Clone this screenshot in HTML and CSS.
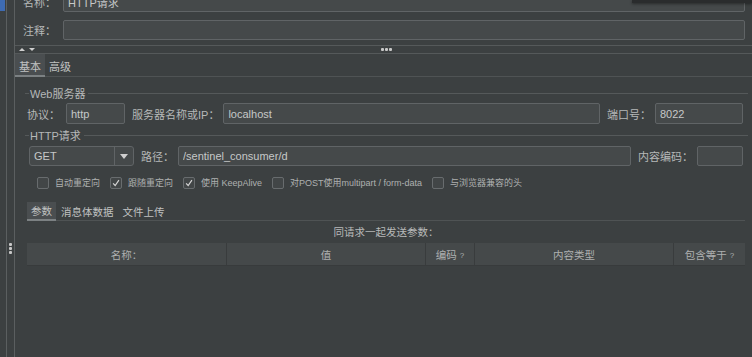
FILE: index.html
```html
<!DOCTYPE html>
<html lang="zh-CN">
<head>
    <meta charset="UTF-8" />
    <meta name="viewport" content="width=device-width, initial-scale=1.0" />
    <title>HTTP请求</title>
    <link rel="stylesheet" href="styles.css">
</head>
<body>
<div class="app">
    <div class="gutter"><div class="gutter-mark"></div></div>
    <div class="splitter"><span class="vgrip"><i></i><i></i><i></i></span></div>

    <div class="main">
        <div class="header-fields">
            <div class="field-row name-row">
                <label class="lbl">名称：</label>
                <input class="input grow" type="text" value="HTTP请求">
            </div>
            <div class="field-row">
                <label class="lbl">注释：</label>
                <input class="input grow" type="text" value="">
            </div>
        </div>

        <div class="divider-bar">
            <span class="arrows"><i class="up"></i><i class="down"></i></span>
            <span class="hgrip"><i></i><i></i><i></i></span>
        </div>

        <div class="tabs">
            <span class="tab active">基本</span>
            <span class="tab">高级</span>
        </div>

        <div class="panel">
            <div class="group-title"><span>Web服务器</span></div>
            <div class="row">
                <label class="lbl first">协议：</label>
                <input class="input proto" type="text" value="http">
                <label class="lbl">服务器名称或IP：</label>
                <input class="input grow" type="text" value="localhost">
                <label class="lbl">端口号：</label>
                <input class="input port" type="text" value="8022">
            </div>

            <div class="group-title"><span>HTTP请求</span></div>
            <div class="row row-request">
                <div class="combo">
                    <span class="combo-value">GET</span>
                    <span class="combo-btn"><i></i></span>
                </div>
                <label class="lbl">路径：</label>
                <input class="input grow" type="text" value="/sentinel_consumer/d">
                <label class="lbl">内容编码：</label>
                <input class="input enc" type="text" value="">
            </div>

            <div class="checks">
                <span class="check"><span class="box"></span>自动重定向</span>
                <span class="check"><span class="box on"><svg viewBox="0 0 12 12"><polyline points="2.5,6.5 5,9 9.5,2.5"/></svg></span>跟随重定向</span>
                <span class="check"><span class="box on"><svg viewBox="0 0 12 12"><polyline points="2.5,6.5 5,9 9.5,2.5"/></svg></span>使用 KeepAlive</span>
                <span class="check"><span class="box"></span>对POST使用multipart / form-data</span>
                <span class="check"><span class="box"></span>与浏览器兼容的头</span>
            </div>

            <div class="params">
                <div class="tabs small-tabs">
                    <span class="tab active">参数</span>
                    <span class="tab">消息体数据</span>
                    <span class="tab">文件上传</span>
                </div>
                <div class="params-caption">同请求一起发送参数：</div>
                <div class="table-head">
                    <span class="th">名称：</span>
                    <span class="th">值</span>
                    <span class="th">编码<small>?</small></span>
                    <span class="th">内容类型</span>
                    <span class="th">包含等于<small>?</small></span>
                </div>
            </div>
        </div>
    </div>

    <div class="popup-edge"></div>
</div>
</body>
</html>
```

FILE: styles.css
```css
* {
    box-sizing: border-box;
}
html, body {
    margin: 0;
    height: 100%;
}
body {
    background: #3c4041;
    color: #b6b8b8;
    font-family: "Liberation Sans", "Noto Sans CJK SC", sans-serif;
    font-size: 11px;
    overflow: hidden;
}
.app {
    position: relative;
    display: flex;
    height: 357px;
}
.gutter {
    width: 7px;
    border-right: 1px solid #5b5f60;
}
.gutter-mark {
    width: 5px;
    height: 11px;
    background: #3e6bb2;
}
.splitter {
    width: 8px;
    border-right: 1px solid #5b5f60;
    display: flex;
    justify-content: center;
    padding-top: 243px;
}
.vgrip {
    display: flex;
    flex-direction: column;
    gap: 1px;
}
.vgrip i, .hgrip i {
    display: block;
    width: 3px;
    height: 3px;
    background: #c8c8c8;
    border-radius: 1px;
}
.main {
    flex: 1;
    min-width: 0;
    display: flex;
    flex-direction: column;
}

/* name / comment */
.header-fields {
    padding: 0 7px 5px 8px;
    border-bottom: 1px solid #55595a;
}
.field-row {
    display: flex;
    align-items: center;
    height: 20px;
}
.field-row + .field-row {
    margin-top: 8px;
}
.name-row {
    margin-top: -8px;
}
.field-row .lbl {
    width: 40px;
    margin: 0;
}
.input {
    height: 20px;
    background: #45494a;
    border: 1px solid #606466;
    border-radius: 2px;
    color: #c6c8c8;
    font: inherit;
    padding: 0 4px;
    outline: none;
}
.grow {
    flex: 1;
    min-width: 0;
}

/* splitter bar */
.divider-bar {
    height: 8px;
    border-bottom: 1px solid #55595a;
    display: flex;
    align-items: center;
    padding-left: 4px;
}
.arrows {
    display: flex;
    gap: 4px;
    width: 362px;
}
.arrows i {
    width: 0;
    height: 0;
    border-left: 3px solid transparent;
    border-right: 3px solid transparent;
}
.arrows .up {
    border-bottom: 3px solid #cfcfcf;
}
.arrows .down {
    border-top: 3px solid #cfcfcf;
}
.hgrip {
    display: flex;
    gap: 1px;
}

/* tabs */
.tabs {
    display: flex;
    height: 23px;
    box-shadow: inset 0 -1px #4f5354;
}
.tab {
    display: flex;
    align-items: center;
    padding: 0 4px;
    color: #c0c2c2;
}
.tab.active {
    background: #4a4e50;
    border-bottom: 2px solid #7c8183;
    padding-top: 2px;
}

/* basic panel */
.panel {
    padding: 0 4px 0 10px;
}
.group-title {
    display: flex;
    align-items: center;
    height: 14px;
    margin-top: 9px;
}
.group-title::before {
    content: "";
    width: 4px;
    height: 1px;
    background: #55595a;
    margin-right: 1px;
}
.group-title::after {
    content: "";
    flex: 1;
    height: 1px;
    background: #55595a;
    margin-left: 3px;
}
.row {
    display: flex;
    align-items: center;
    height: 21px;
    margin-top: 3px;
    padding: 0 5px 0 2px;
}
.row .input {
    height: 21px;
}
.row + .group-title {
    margin-top: 4px;
}
.lbl {
    margin: 0 4px 0 7px;
    white-space: nowrap;
}
.lbl.first {
    margin-left: 0;
    margin-right: 6px;
}
.proto {
    width: 59px;
}
.port {
    width: 88px;
}
.row-request {
    height: 20px;
    margin-top: 4px;
    padding-left: 4px;
}
.row-request .input {
    height: 20px;
}
.enc {
    width: 46px;
}
.combo {
    display: flex;
    width: 105px;
    height: 20px;
    background: #45494a;
    border: 1px solid #606466;
    border-radius: 3px;
    color: #c6c8c8;
}
.combo-value {
    flex: 1;
    display: flex;
    align-items: center;
    padding-left: 4px;
}
.combo-btn {
    width: 19px;
    border-left: 1px solid #606466;
    display: flex;
    align-items: center;
    justify-content: center;
}
.combo-btn i {
    width: 0;
    height: 0;
    border-left: 4px solid transparent;
    border-right: 4px solid transparent;
    border-top: 5px solid #cfcfcf;
}

/* checkboxes */
.checks {
    display: flex;
    align-items: center;
    gap: 10px;
    margin-top: 10px;
    padding-left: 12px;
    font-size: 9px;
    color: #aeb0b0;
}
.check {
    display: flex;
    align-items: center;
    gap: 6px;
}
.box {
    width: 12px;
    height: 12px;
    border: 1px solid #686c6e;
    border-radius: 2px;
    background: #424647;
    display: flex;
}
.box svg {
    width: 10px;
    height: 10px;
    fill: none;
    stroke: #d4d4d4;
    stroke-width: 1.4;
}

/* parameters */
.params {
    margin: 13px 3px 0 2px;
    font-size: 10.5px;
}
.small-tabs {
    height: 19px;
}
.small-tabs .tab {
    padding: 0 4px;
}
.small-tabs .tab + .tab {
    margin-left: 1px;
}
.params-caption {
    height: 22px;
    line-height: 22px;
    text-align: center;
    color: #b8baba;
}
.table-head {
    display: grid;
    grid-template-columns: 200px 199px 49px 199px 1fr;
    height: 23px;
    background: #45494a;
    border-bottom: 1px solid #383b3c;
}
.th {
    display: flex;
    align-items: center;
    justify-content: center;
    border-right: 1px solid #393c3d;
    color: #aeb0b0;
}
.th:last-child {
    border-right: none;
}
.th small {
    font-size: 8px;
    margin-left: 3px;
    margin-top: 2px;
}

/* edge of a floating window above the form */
.popup-edge {
    position: absolute;
    top: 0;
    right: 0;
    width: 120px;
    height: 3px;
    background: #2a2c2d;
    box-shadow: 0 1px 3px rgba(0, 0, 0, 0.45);
}
```
